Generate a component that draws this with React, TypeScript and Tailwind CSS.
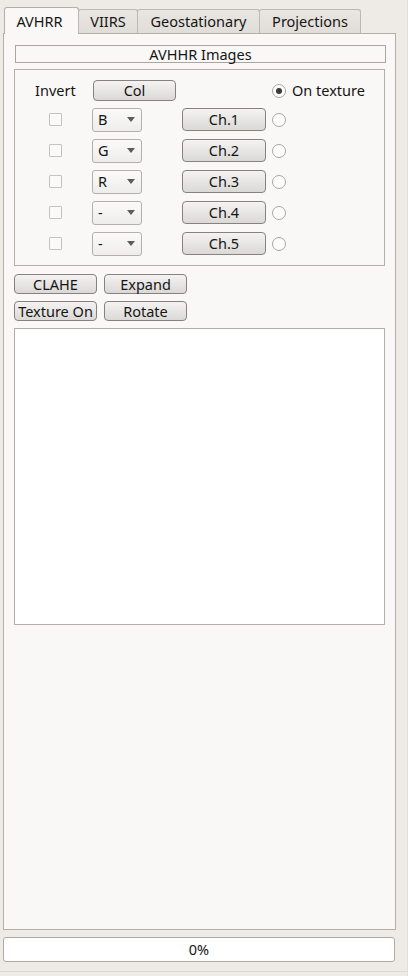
import React from "react";

const font = { fontFamily: '"Noto Sans", "Open Sans", sans-serif' };

const btn =
  "flex items-center justify-center rounded-[4px] border border-[#858280] bg-gradient-to-b from-[#f4f3f2] to-[#dbd9d6] text-[14.5px] leading-none text-[#151515]";

function Radio({ checked = false }: { checked?: boolean }) {
  return (
    <div className="w-[14px] h-[14px] rounded-full border border-[#aaa6a2] bg-[#fdfcfc] flex items-center justify-center shrink-0">
      {checked && <div className="w-[6px] h-[6px] rounded-full bg-[#3a3a3a]" />}
    </div>
  );
}

function Combo({ value }: { value: string }) {
  return (
    <div className="w-[50px] h-[24px] rounded-[3px] border border-[#b3afab] bg-gradient-to-b from-[#fbfaf9] to-[#efedeb] flex items-center pl-[5px] pr-[6px] text-[14.5px] text-[#151515]">
      <span className="flex-1">{value}</span>
      <svg width="8" height="5" viewBox="0 0 8 5">
        <path d="M0 0 L8 0 L4 5 Z" fill="#5c5c5c" />
      </svg>
    </div>
  );
}

const channels = [
  { combo: "B", ch: "Ch.1" },
  { combo: "G", ch: "Ch.2" },
  { combo: "R", ch: "Ch.3" },
  { combo: "-", ch: "Ch.4" },
  { combo: "-", ch: "Ch.5" },
];

const tabs = [
  { label: "AVHRR", w: "w-[75px]", active: true },
  { label: "VIIRS", w: "w-[60px]", active: false },
  { label: "Geostationary", w: "w-[123px]", active: false },
  { label: "Projections", w: "w-[102px]", active: false },
];

export default function App() {
  return (
    <div
      className="w-[408px] h-[976px] bg-[#eeebe7] flex flex-col pt-[7px] text-[#151515] border-r border-[#e2dfdb]"
      style={font}
    >
      {/* Tab bar */}
      <div className="flex items-end h-[26px] pl-[4px] relative z-10">
        {tabs.map((t) =>
          t.active ? (
            <div
              key={t.label}
              className={`${t.w} h-[27px] -mb-px -mr-px bg-[#faf8f6] border border-b-0 border-[#b2aeaa] rounded-t-[3px] flex items-center justify-center text-[14.5px] pt-[1px] pr-[4px]`}
            >
              {t.label}
            </div>
          ) : (
            <div
              key={t.label}
              className={`${t.w} h-[24px] -mr-px bg-gradient-to-b from-[#e9e6e2] to-[#e1ded9] border border-b-0 border-[#bcb8b4] rounded-t-[3px] flex items-center justify-center text-[14.5px] pt-[1px]`}
            >
              {t.label}
            </div>
          )
        )}
      </div>

      {/* Tab pane */}
      <div className="ml-[3px] w-[393px] h-[897px] border border-[#b2aeaa] bg-[#faf8f6] flex flex-col pl-[10px]">
        <div className="mt-[11px] ml-[1px] w-[371px] h-[18px] border border-[#a9a5a1] flex items-center justify-center text-[14.5px] leading-none">
          AVHHR Images
        </div>

        {/* Group box */}
        <div className="mt-[6px] w-[371px] h-[197px] border border-[#b2aeaa] flex flex-col pt-[7px]">
          <div className="h-[27px] flex items-center">
            <span className="ml-[20px] w-[41px] text-[14.5px]">Invert</span>
            <div className={`${btn} ml-[17px] w-[83px] h-[21px]`}>Col</div>
            <div className="ml-[96px] flex items-center gap-[6px]">
              <Radio checked />
              <span className="text-[14.5px]">On texture</span>
            </div>
          </div>
          {channels.map((c) => (
            <div key={c.ch} className="h-[31px] flex items-center">
              <div className="ml-[34px] w-[13px] h-[13px] border border-[#c6c2be] bg-[#fbfaf9] rounded-[1px]" />
              <div className="ml-[30px]">
                <Combo value={c.combo} />
              </div>
              <div className={`${btn} ml-[40px] w-[84px] h-[23px]`}>{c.ch}</div>
              <div className="ml-[6px]">
                <Radio />
              </div>
            </div>
          ))}
        </div>

        {/* Action buttons */}
        <div className="mt-[8px] flex gap-[7px]">
          <div className={`${btn} w-[83px] h-[20px]`}>CLAHE</div>
          <div className={`${btn} w-[83px] h-[20px]`}>Expand</div>
        </div>
        <div className="mt-[7px] flex gap-[7px]">
          <div className={`${btn} w-[83px] h-[20px]`}>Texture On</div>
          <div className={`${btn} w-[83px] h-[20px]`}>Rotate</div>
        </div>

        {/* Image area */}
        <div className="mt-[7px] w-[371px] h-[297px] border border-[#b2aeaa] bg-white" />
      </div>

      {/* Progress bar */}
      <div className="mt-[7px] ml-[3px] w-[392px] h-[25px] rounded-[3px] border border-[#aeaaa6] bg-white flex items-center justify-center text-[14.5px]">
        0%
      </div>
      <div className="mt-[9px] flex-1 border-t border-[#dcd9d5]" />
    </div>
  );
}
